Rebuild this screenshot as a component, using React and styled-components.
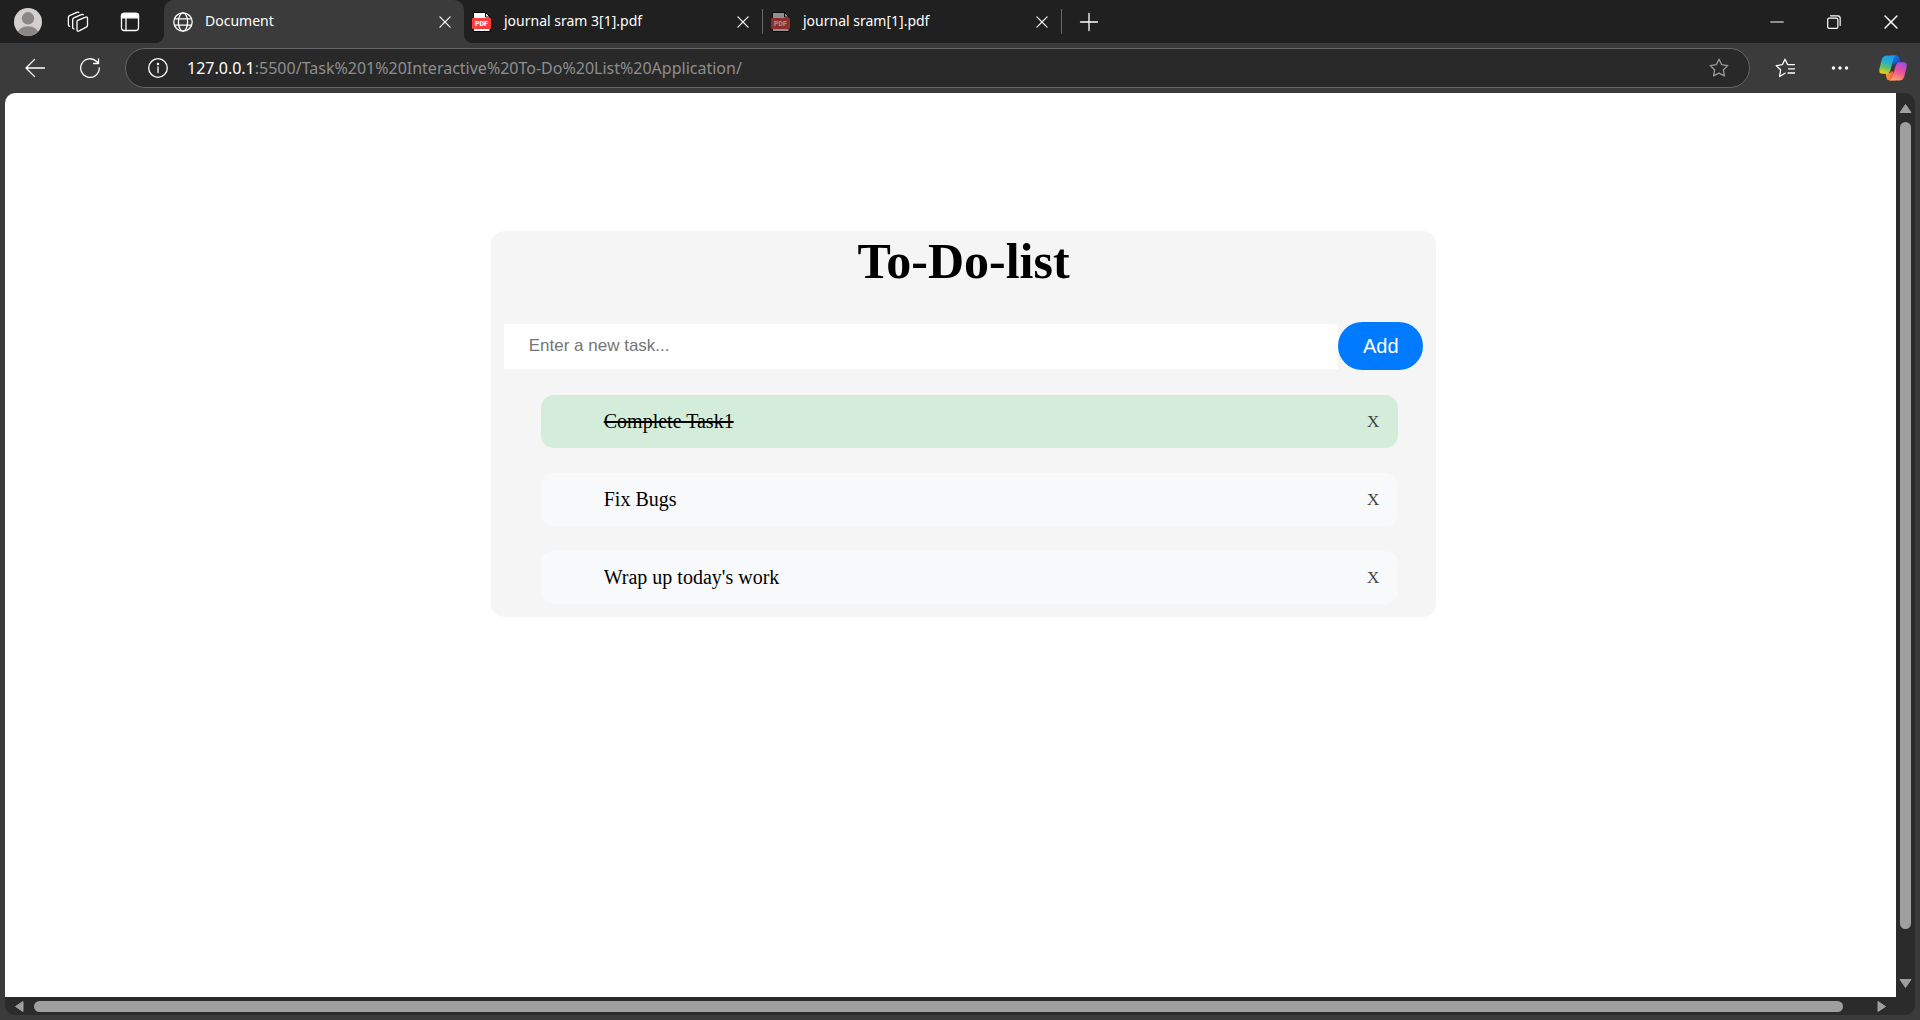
import React, { useState } from "react";
import styled, { createGlobalStyle } from "styled-components";

const GlobalStyle = createGlobalStyle`
  *, *::before, *::after { box-sizing: border-box; }
  html, body, #root { height: 100%; }
  body { margin: 0; background: #3b3b3b; overflow: hidden; }
  button { font: inherit; cursor: pointer; }
`;

const uiFont = `"Noto Sans", "Open Sans", sans-serif`;

const Browser = styled.div`
  display: flex;
  flex-direction: column;
  height: 100%;
  background: #3b3b3b;
  color: #fff;
  font-family: ${uiFont};
`;

const IconButton = styled.button`
  display: flex;
  align-items: center;
  justify-content: center;
  flex: none;
  width: ${(p) => p.$width || 32}px;
  height: 32px;
  padding: 0;
  border: 0;
  background: none;
  color: ${(p) => p.$color || "#fff"};
`;

const TabStrip = styled.header`
  display: flex;
  align-items: center;
  flex: none;
  height: 43px;
  background: #202020;
`;

const StripActions = styled.div`
  display: flex;
  align-items: center;
  justify-content: space-between;
  width: 164px;
  padding: 0 18px 0 12px;
`;

const Tabs = styled.nav`
  display: flex;
  align-items: stretch;
  height: 100%;
`;

const Tab = styled.div`
  position: relative;
  display: flex;
  align-items: center;
  width: ${(p) => (p.$active ? 300 : 298)}px;
  padding: 0 3px 0 ${(p) => (p.$active ? 9 : 8)}px;
  gap: 12px;
  background: ${(p) => (p.$active ? "#3b3b3b" : "transparent")};
  border-radius: 10px 10px 0 0;

  ${(p) =>
    p.$active &&
    `
    &::before, &::after {
      content: "";
      position: absolute;
      bottom: 0;
      width: 10px;
      height: 10px;
    }
    &::before {
      right: 100%;
      background: radial-gradient(circle at 0 0, #202020 10px, #3b3b3b 11px);
    }
    &::after {
      left: 100%;
      background: radial-gradient(circle at 100% 0, #202020 10px, #3b3b3b 11px);
    }
  `}
`;

const TabTitle = styled.span`
  flex: 1;
  padding-bottom: 2px;
  font-size: 14px;
  line-height: 20px;
  white-space: nowrap;
`;

const Divider = styled.span`
  flex: none;
  align-self: center;
  width: 1px;
  height: 25px;
  background: #666;
`;

const WindowControls = styled.div`
  display: flex;
  align-items: center;
  margin-left: auto;
  padding-right: 1px;
`;

const Toolbar = styled.div`
  display: flex;
  align-items: center;
  flex: none;
  height: 50px;
  padding-left: 8px;
`;

const NavButtons = styled.div`
  display: flex;
  width: 117px;
`;

const AddressBar = styled.form`
  display: flex;
  align-items: center;
  flex: 1;
  height: 40px;
  margin-right: 6px;
  padding: 0 14px 0 16px;
  border: 1px solid #666;
  border-radius: 20px;
  background: #292929;
`;

const Address = styled.div`
  flex: 1;
  padding-left: 13px;
  font-size: 16px;
  line-height: 24px;
  color: #8e8e8e;
  white-space: nowrap;
`;

const Host = styled.span`
  color: #fff;
`;

const Frame = styled.div`
  display: grid;
  flex: 1;
  min-height: 0;
  grid-template-columns: 1fr 19px;
  grid-template-rows: 1fr 18px;
  margin: 0 5px 5px;
  border-radius: 10px;
  background: #2b2b2b;
  overflow: hidden;
`;

const Page = styled.main`
  background: #fff;
  color: #000;
  padding-top: 138px;
  font-family: "Liberation Serif", "Times New Roman", serif;
`;

const Track = styled.div`
  display: flex;
  align-items: center;
  flex-direction: ${(p) => (p.$vertical ? "column" : "row")};
  gap: ${(p) => (p.$vertical ? 8 : 9)}px;
  padding: ${(p) => (p.$vertical ? "10px 0 8px" : "0 9px")};
`;

const Thumb = styled.div`
  flex: 1;
  width: 11px;
  margin-bottom: 41px;
  border-radius: 6px;
  background: #9f9f9f;
`;

const HorizontalThumb = styled(Thumb)`
  width: auto;
  height: 11px;
  margin: 0 24px 0 0;
`;

const Card = styled.section`
  width: 50%;
  margin-left: calc(25% + 13px);
  padding-bottom: 13px;
  border-radius: 13px;
  background: #f5f5f5;
`;

const Title = styled.h1`
  margin: 0;
  font-size: 50px;
  line-height: 60px;
  text-align: center;
`;

const TaskForm = styled.form`
  display: flex;
  align-items: center;
  margin: 31px 13px 0;
`;

const TaskInput = styled.input`
  flex: 1;
  min-width: 0;
  height: 45px;
  padding: 0 25px;
  border: 0;
  outline: 0;
  border-radius: 0;
  background: #fff;
  font-family: "Liberation Sans", Arial, sans-serif;
  font-size: 17px;
  line-height: 20px;

  &::placeholder {
    color: #757575;
    opacity: 1;
  }
`;

const AddButton = styled.button`
  width: 85px;
  height: 48px;
  padding: 0;
  border: 0;
  border-radius: 24px;
  background: #007bff;
  color: #fff;
  font-family: "Liberation Sans", Arial, sans-serif;
  font-size: 20px;
  line-height: 24px;
`;

const TaskList = styled.ul`
  display: flex;
  flex-direction: column;
  gap: 25px;
  margin: 25px 38px 0 50px;
  padding: 0;
  list-style: none;
`;

const Task = styled.li`
  display: flex;
  align-items: center;
  justify-content: space-between;
  height: 53px;
  padding: 0 19px 0 63px;
  border-radius: 13px;
  background: ${(p) => (p.$done ? "#d4edda" : "#f8f9fa")};
  font-size: 20px;
  line-height: 24px;
`;

const TaskText = styled.span`
  padding-bottom: 2px;
  text-decoration: ${(p) => (p.$done ? "line-through 2px" : "none")};
`;

const RemoveButton = styled.button`
  padding: 0;
  border: 0;
  background: none;
  color: #444;
  font-size: 17px;
  line-height: 24px;
`;

const Line = ({ size = 20, children, width = 1.3 }) => (
  <svg
    width={size}
    height={size}
    viewBox="0 0 20 20"
    fill="none"
    stroke="currentColor"
    strokeWidth={width}
    strokeLinecap="round"
    strokeLinejoin="round"
    aria-hidden="true"
  >
    {children}
  </svg>
);

const Avatar = () => (
  <svg width="28" height="28" viewBox="0 0 28 28" aria-hidden="true">
    <clipPath id="avatar">
      <circle cx="14" cy="14" r="14" />
    </clipPath>
    <g clipPath="url(#avatar)">
      <rect width="28" height="28" fill="#d2d0ce" />
      <circle cx="14" cy="10.3" r="6.2" fill="#8b8784" />
      <ellipse cx="14" cy="26" rx="10.5" ry="7.8" fill="#8b8784" />
    </g>
  </svg>
);

const Workspaces = () => (
  <svg width="24" height="22" viewBox="0 0 24 22" fill="none" stroke="currentColor" strokeWidth="1.3" strokeLinejoin="round" aria-hidden="true">
    <path d="M10.7 9.4 18.7 6.2Q20.5 5.6 20.5 7.2V14.2Q20.5 15.6 19.3 16.2L12.1 19.9Q10 20.8 10 18.8V10.8Q10 9.8 10.7 9.4Z" />
    <path d="M7.5 17.8Q5.7 18 5.7 16.4V8.6Q5.7 7.4 6.8 6.8L14.3 3.6Q16 3 16.5 4.2" />
    <path d="M3.2 15.6Q1.4 15.4 1.4 13.8V6.3Q1.4 5.2 2.5 4.7L9.8 1.4Q11.4.8 12.2 1.9" />
  </svg>
);

const VerticalTabs = () => (
  <Line>
    <rect x="1.5" y="1.5" width="17" height="17" rx="2.4" />
    <path d="M1.5 3.8Q1.5 1.5 3.8 1.5H16.2Q18.5 1.5 18.5 3.8V5.8H1.5Z" fill="currentColor" />
    <path d="M6 6v12.5" />
  </Line>
);

const Globe = () => (
  <Line>
    <circle cx="10" cy="10" r="9.2" />
    <ellipse cx="10" cy="10" rx="4.6" ry="9.2" />
    <path d="M1.6 6.8h16.8M1.6 13.2h16.8" />
  </Line>
);

const Cross = ({ size = 12 }) => (
  <Line size={size} width={2.1}>
    <path d="M1.5 1.5l17 17M18.5 1.5l-17 17" />
  </Line>
);

const Pdf = ({ dim }) => (
  <svg width="20" height="20" viewBox="0 0 20 20" opacity={dim ? 0.5 : 1} aria-hidden="true">
    <path d="M1.5.5H13.5L18 5V19.5H1.5Z" fill="#fff" stroke="#000" />
    <path d="M13.5.5V5H18Z" fill="#fff" stroke="#000" />
    <rect x="0" y="6" width="19" height="11" rx="1" fill="#ff3b3b" />
    <text x="9.5" y="14" textAnchor="middle" fill="#fff" fontFamily="Roboto, sans-serif" fontWeight="900" fontSize="7">
      PDF
    </text>
  </svg>
);

const starPath = "M10 1.2l2.7 5.5 6.1.9-4.4 4.2 1 6.1L10 15.1l-5.4 2.8 1-6.1L1.2 7.6l6.1-.9Z";

const Copilot = () => (
  <svg width="28" height="26" viewBox="0 0 28 26" aria-hidden="true">
    <defs>
      <linearGradient id="cpLeft" x1="0.6" y1="0" x2="0.3" y2="1">
        <stop offset="0" stopColor="#1a9cf0" />
        <stop offset=".4" stopColor="#27b0c8" />
        <stop offset=".7" stopColor="#6fc15c" />
        <stop offset="1" stopColor="#f6cf12" />
      </linearGradient>
      <linearGradient id="cpRight" x1="0.7" y1="0" x2="0.3" y2="1">
        <stop offset="0" stopColor="#a54be8" />
        <stop offset=".5" stopColor="#ee5296" />
        <stop offset="1" stopColor="#ffa765" />
      </linearGradient>
      <linearGradient id="cpTop" x1="0" y1="0" x2="1" y2="1">
        <stop offset="0" stopColor="#1682e8" />
        <stop offset="1" stopColor="#1a3fc4" />
      </linearGradient>
      <linearGradient id="cpBottom" x1="0" y1="0" x2="1" y2="0">
        <stop offset="0" stopColor="#f9a32d" />
        <stop offset="1" stopColor="#ee4d4b" />
      </linearGradient>
    </defs>
    <path d="M12 .5H17.500Q19.800.5 20.400 3L21.500 8H18Q16.200 8 15.500 10L14 9Z" fill="url(#cpTop)" />
    <path d="M16 25.5H10.500Q8.200 25.500 7.600 23L6.500 18H10Q11.800 18 12.500 16L14 17Z" fill="url(#cpBottom)" />
    <path d="M8 .5H17.500Q15.400 1 14.600 3.800L11.600 14.500Q10.500 18.800 7 18.800H3.500Q-.4 18.800.4 14L2.600 5Q3.700.5 8 .5Z" fill="url(#cpLeft)" />
    <path d="M20 25.5H10.500Q12.600 25 13.400 22.200L16.400 11.500Q17.500 7.200 21 7.200H24.500Q28.400 7.200 27.600 12L25.400 21Q24.300 25.500 20 25.500Z" fill="url(#cpRight)" />
  </svg>
);

const arrowPaths = {
  up: "M6.5 1.5 12 9.5H1Z",
  down: "M6.5 9.5 1 1.5H12Z",
  left: "M1.5 6.5 9 1.5V11.5Z",
  right: "M9.5 6.5 2 1.5V11.5Z",
};

const Arrow = ({ direction }) => (
  <svg
    width={direction === "up" || direction === "down" ? 13 : 11}
    height={direction === "up" || direction === "down" ? 11 : 13}
    fill="#9f9f9f"
    stroke="#9f9f9f"
    strokeLinejoin="round"
    aria-hidden="true"
  >
    <path d={arrowPaths[direction]} />
  </svg>
);

const initialTasks = [
  { id: 1, text: "Complete Task1", done: true },
  { id: 2, text: "Fix Bugs", done: false },
  { id: 3, text: "Wrap up today's work", done: false },
];

function TodoList() {
  const [tasks, setTasks] = useState(initialTasks);
  const [draft, setDraft] = useState("");

  const addTask = (event) => {
    event.preventDefault();
    if (!draft.trim()) return;
    setTasks([...tasks, { id: Date.now(), text: draft.trim(), done: false }]);
    setDraft("");
  };

  const toggle = (id) => setTasks(tasks.map((t) => (t.id === id ? { ...t, done: !t.done } : t)));
  const remove = (id) => setTasks(tasks.filter((t) => t.id !== id));

  return (
    <Card>
      <Title>To-Do-list</Title>
      <TaskForm onSubmit={addTask}>
        <TaskInput
          type="text"
          aria-label="New task"
          placeholder="Enter a new task..."
          value={draft}
          onChange={(e) => setDraft(e.target.value)}
        />
        <AddButton type="submit">Add</AddButton>
      </TaskForm>
      <TaskList>
        {tasks.map((task) => (
          <Task key={task.id} $done={task.done}>
            <TaskText $done={task.done} onClick={() => toggle(task.id)}>
              {task.text}
            </TaskText>
            <RemoveButton type="button" aria-label={`Remove ${task.text}`} onClick={() => remove(task.id)}>
              X
            </RemoveButton>
          </Task>
        ))}
      </TaskList>
    </Card>
  );
}

export default function App() {
  return (
    <Browser>
      <GlobalStyle />
      <TabStrip>
        <StripActions>
          <IconButton aria-label="Profile"><Avatar /></IconButton>
          <IconButton aria-label="Workspaces"><Workspaces /></IconButton>
          <IconButton aria-label="Tab actions"><VerticalTabs /></IconButton>
        </StripActions>
        <Tabs aria-label="Tabs">
          <Tab $active>
            <Globe />
            <TabTitle>Document</TabTitle>
            <IconButton aria-label="Close tab"><Cross /></IconButton>
          </Tab>
          <Tab>
            <Pdf />
            <TabTitle>journal sram 3[1].pdf</TabTitle>
            <IconButton aria-label="Close tab"><Cross /></IconButton>
          </Tab>
          <Divider />
          <Tab>
            <Pdf dim />
            <TabTitle>journal sram[1].pdf</TabTitle>
            <IconButton aria-label="Close tab"><Cross /></IconButton>
          </Tab>
          <Divider />
        </Tabs>
        <IconButton $width={54} aria-label="New tab">
          <Line>
            <path d="M10 1.5v17M1.5 10h17" />
          </Line>
        </IconButton>
        <WindowControls>
          <IconButton $width={57} aria-label="Minimize">
            <Line size={14} width={1.5}><path d="M1 10h18" /></Line>
          </IconButton>
          <IconButton $width={57} aria-label="Restore">
            <Line size={14} width={1.7}>
              <rect x="1" y="4.5" width="14.5" height="14.5" rx="2" />
              <path d="M5 1.2H15.5Q18.8 1.2 18.8 4.5V15" />
            </Line>
          </IconButton>
          <IconButton $width={57} aria-label="Close window"><Cross size={14} /></IconButton>
        </WindowControls>
      </TabStrip>
      <Toolbar>
        <NavButtons>
          <IconButton $width={54} aria-label="Back">
            <Line><path d="M19.5 10H1M9.5 1.5L1 10l8.5 8.5" /></Line>
          </IconButton>
          <IconButton $width={56} aria-label="Reload">
            <Line>
              <path d="M19.3 10A9.3 9.3 0 1 1 16.6 3.500L18.5 5.500M18.5 .8V5.500H13.5" />
            </Line>
          </IconButton>
        </NavButtons>
        <AddressBar onSubmit={(e) => e.preventDefault()}>
          <IconButton type="button" aria-label="Site information">
            <Line>
              <circle cx="10" cy="10" r="9.3" />
              <path d="M10 9v5.5" />
              <circle cx="10" cy="6" r=".6" fill="currentColor" />
            </Line>
          </IconButton>
          <Address>
            <Host>127.0.0.1</Host>:5500/Task%201%20Interactive%20To-Do%20List%20Application/
          </Address>
          <IconButton type="button" $color="#999" aria-label="Add to favorites">
            <Line><path d={starPath} /></Line>
          </IconButton>
        </AddressBar>
        <IconButton $width={58} aria-label="Favorites">
          <Line>
            <path d="M13 6.7L12.7 6.7 10 1.2 7.3 6.7 1.2 7.6 5.6 11.8 4.6 18.5 10 15.2M13.5 6.7H20M13.5 10.8H20M13 15H20" />
          </Line>
        </IconButton>
        <IconButton $width={52} aria-label="Settings and more">
          <svg width="18" height="4" viewBox="0 0 18 4" fill="currentColor" aria-hidden="true">
            <circle cx="2.5" cy="2" r="1.7" />
            <circle cx="9" cy="2" r="1.7" />
            <circle cx="15.5" cy="2" r="1.7" />
          </svg>
        </IconButton>
        <IconButton $width={54} aria-label="Copilot"><Copilot /></IconButton>
      </Toolbar>
      <Frame>
        <Page>
          <TodoList />
        </Page>
        <Track $vertical>
          <Arrow direction="up" />
          <Thumb />
          <Arrow direction="down" />
        </Track>
        <Track>
          <Arrow direction="left" />
          <HorizontalThumb />
          <Arrow direction="right" />
        </Track>
      </Frame>
    </Browser>
  );
}
